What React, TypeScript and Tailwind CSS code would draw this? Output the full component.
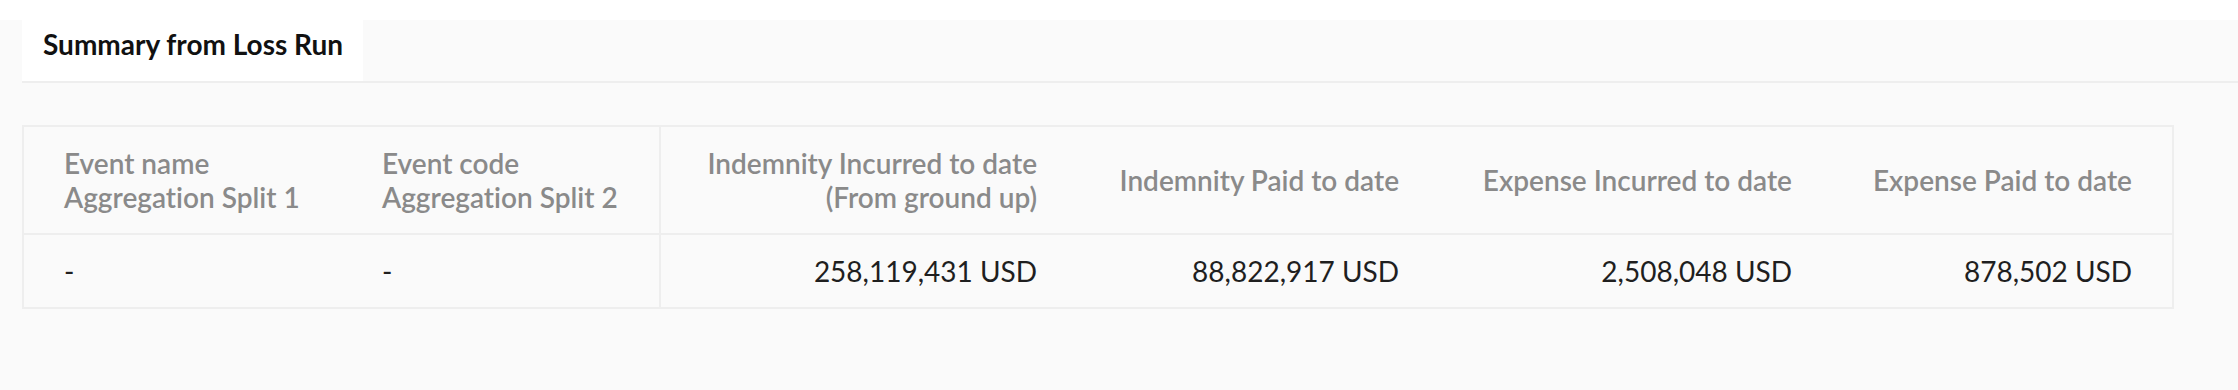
const columns = [
  { label: ["Event name", "Aggregation Split 1"], align: "left", cell: "w-[319px] pl-[40px] pr-[40px]" },
  { label: ["Event code", "Aggregation Split 2"], align: "left", cell: "w-[318px] pl-[40px] pr-[20px] border-r-2 border-[#eeeeee]" },
  { label: ["Indemnity Incurred to date", "(From ground up)"], align: "right", cell: "w-[417px] pl-[20px] pr-[40px]" },
  { label: ["Indemnity Paid to date"], align: "right", cell: "w-[362px] pl-[20px] pr-[40px]" },
  { label: ["Expense Incurred to date"], align: "right", cell: "w-[393px] pl-[20px] pr-[40px]" },
  { label: ["Expense Paid to date"], align: "right", cell: "w-[341px] pl-[20px] pr-[40px]" },
];

const row = ["-", "-", "258,119,431 USD", "88,822,917 USD", "2,508,048 USD", "878,502 USD"];

export default function App() {
  return (
    <div className="min-h-[390px] bg-white pt-[20px] font-['Lato',sans-serif] [font-variant-ligatures:none]">
      <div className="min-h-[370px] bg-[#fafafa] pl-[22px] pb-[40px]">
        <div className="flex border-b-2 border-[#eeeeee]">
          <div className="h-[61px] w-[341px] bg-white pl-[21px] pt-[10px]">
            <span className="block text-[28px] font-bold text-[#111111] leading-[28px]">Summary from Loss Run</span>
          </div>
        </div>

        <div className="mt-[42px] mr-[64px]">
          <table className="table-fixed border-collapse border-2 border-[#eeeeee] text-[28px] leading-[34px]">
            <thead>
              <tr className="border-b-2 border-[#eeeeee]">
                {columns.map((col, i) => (
                  <th
                    key={i}
                    className={`${col.cell} h-[108px] whitespace-nowrap align-middle font-semibold text-[#8a8a8a] ${
                      col.align === "right" ? "text-right" : "text-left"
                    }`}
                  >
                    {col.label.map((line, j) => (
                      <div key={j}>{line}</div>
                    ))}
                  </th>
                ))}
              </tr>
            </thead>
            <tbody>
              <tr>
                {row.map((value, i) => (
                  <td
                    key={i}
                    className={`${columns[i].cell} h-[74px] whitespace-nowrap align-middle font-normal text-[#1f1f1f] ${
                      columns[i].align === "right" ? "text-right" : "text-left"
                    }`}
                  >
                    {value}
                  </td>
                ))}
              </tr>
            </tbody>
          </table>
        </div>
      </div>
    </div>
  );
}
